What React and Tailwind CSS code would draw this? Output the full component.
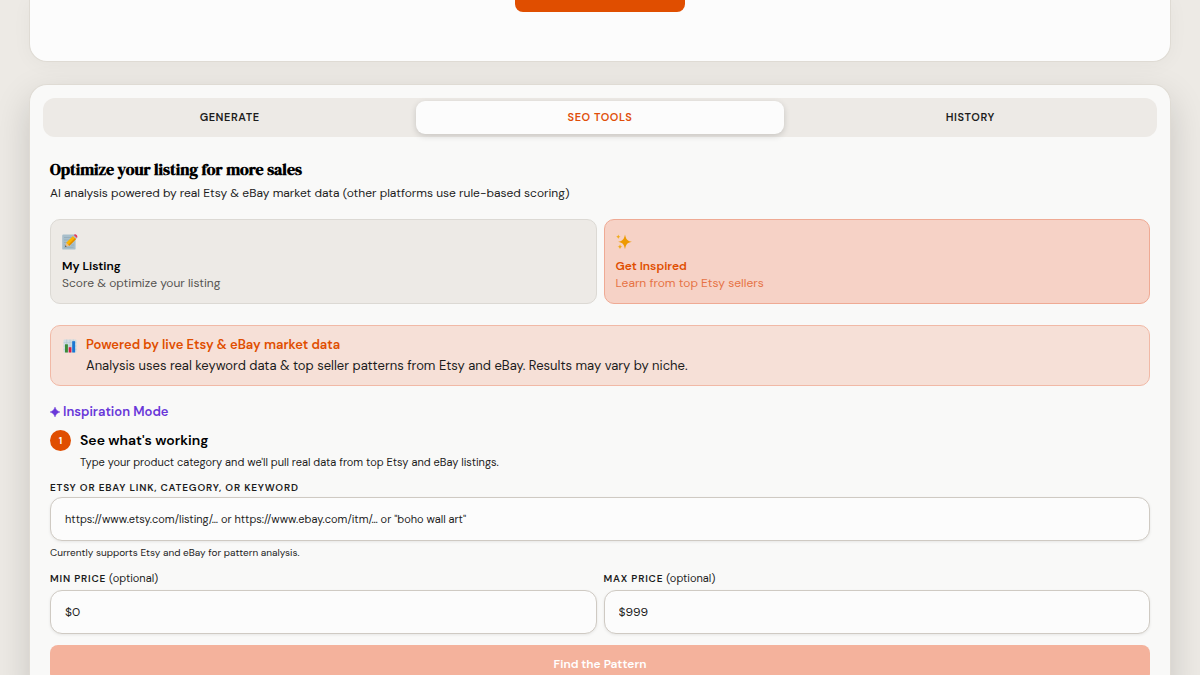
const MemoIcon = () => (
  <svg viewBox="0 0 16 16" className="block h-4 w-4" aria-hidden="true">
    <rect x="0.2" y="0.6" width="13.4" height="15" rx="1.2" fill="#a9bfcb" />
    <path
      d="M2 3.5h8M2 6h6M2 8.500h4M2 11h2M9 11h3M2 13.300h9.500"
      stroke="#7f98a6"
      strokeWidth="0.4"
    />
    <path d="M3 13l1.200-4.300 3.100 3z" fill="#e9bd8c" />
    <path d="M3 13l.5-1.700 1.200 1.100z" fill="#37474f" />
    <path d="M4.200 8.700L11 1.900l3.100 3-6.800 6.800z" fill="#fbb300" />
    <path d="M6.300 10.700L13.100 3.900l1 1-6.800 6.800z" fill="#e08a00" />
    <path d="M11 1.900l.8-.8 3.100 3-.8.800z" fill="#b0bec5" />
    <path d="M11.800 1.100c.8-1 1.800-1.100 2.800-.2.900.9 1 2.200.3 3.200z" fill="#e5395f" />
  </svg>
);

const SparklesIcon = () => (
  <svg viewBox="0 0 16 16" className="block h-4 w-4" aria-hidden="true">
    <path
      d="M9 .4c1.100 5 1.900 6.200 6.900 7.400-5 1.200-5.800 2.400-6.900 7.500C7.900 10.200 7.100 9 2.100 7.800 7.100 6.600 7.900 5.400 9 .4z"
      fill="#ee9a00"
    />
    <path
      d="M2.300.5c.4 1.500.8 1.900 2.300 2.300-1.500.4-1.900.8-2.300 2.300C1.900 3.600 1.500 3.200 0 2.800 1.500 2.400 1.900 2 2.300.5zM4 10.300c.4 1.600.9 2.100 2.500 2.500-1.600.4-2.100.9-2.500 2.500-.4-1.600-.9-2.100-2.500-2.500 1.600-.4 2.100-.9 2.500-2.500z"
      fill="#f0ab1c"
    />
  </svg>
);

const ChartIcon = () => (
  <svg viewBox="0 0 14 14" className="block h-3.5 w-3.5" aria-hidden="true">
    <rect x="0.500" y="0.500" width="13" height="13" rx="1" fill="#cfdce2" />
    <path
      d="M.5 3.700h13M.5 7h13M.5 10.300h13M3.700.5v13M7 .5v13M10.300.5v13"
      stroke="#a9c2cd"
      strokeWidth="0.5"
    />
    <rect x="2" y="5.300" width="2.900" height="8.200" fill="#3d8b37" />
    <rect x="5.700" y="8.200" width="2.700" height="5.300" fill="#d81b45" />
    <rect x="9.200" y="2.200" width="2.900" height="11.300" fill="#1976d2" />
  </svg>
);

const StarIcon = () => (
  <svg viewBox="0 0 10 10" className="block h-2.5 w-2.5" aria-hidden="true">
    <path d="M5 0c1.100 3 2 3.900 5 5-3 1.100-3.900 2-5 5-1.100-3-2-3.900-5-5 3-1.100 3.900-2 5-5z" fill="#6938d9" stroke="#6938d9" strokeWidth="0.4" />
  </svg>
);

const tabs = ["GENERATE", "SEO TOOLS", "HISTORY"];

const App = () => {
  return (
    <div className="min-h-screen overflow-hidden bg-[#edeae5] px-[29px] font-['DM_Sans',Inter,sans-serif] text-[#1c1c1c]">
      <section className="flex justify-center rounded-b-[18px] border border-t-0 border-[#dfdbd4] bg-[#fcfcfc] pb-[49px] shadow-[0_2px_20px_rgba(0,0,0,0.04)]">
        <button
          type="button"
          aria-label="Generate"
          className="h-3 w-[170px] rounded-b-lg bg-[#e04e00]"
        />
      </section>

      <main className="mt-[22px] rounded-t-[18px] border border-b-0 border-[#dfdbd4] bg-[#f9f9f8] p-[13px] shadow-[0_14px_36px_rgba(0,0,0,0.16)]">
        <div role="tablist" className="grid grid-cols-3 gap-[3px] rounded-xl bg-[#edeae6] p-[3px]">
          {tabs.map((tab) => (
            <button
              key={tab}
              type="button"
              role="tab"
              aria-selected={tab === "SEO TOOLS"}
              className={
                tab === "SEO TOOLS"
                  ? "h-[33px] rounded-[9px] bg-[#fcfcfc] text-[11px] font-semibold tracking-wider text-[#e04e0a] shadow-[0_2px_6px_rgba(0,0,0,0.16)]"
                  : "h-[33px] rounded-[9px] text-[11px] font-semibold tracking-wider text-[#1c1c1c]"
              }
            >
              {tab}
            </button>
          ))}
        </div>

        <div className="px-[7px] pt-[21px]">
          <h2 className="font-['DM_Serif_Display','Liberation_Serif',serif] text-[16px] font-bold leading-[22px] text-black">
            Optimize your listing for more sales
          </h2>
          <p className="mt-1 text-[12px] leading-[18px]">
            AI analysis powered by real Etsy &amp; eBay market data (other platforms use rule-based scoring)
          </p>

          <div className="mt-[17px] grid grid-cols-2 gap-[7px]">
            <button
              type="button"
              className="rounded-[10px] border border-[#dcd9d4] bg-[#edeae6] px-[11px] pb-[11px] pt-[14px] text-left"
            >
              <MemoIcon />
              <span className="mt-[7px] block text-[12px] font-semibold leading-[18px] text-black">
                My Listing
              </span>
              <span className="block text-[12px] leading-[17px] text-[#555350]">
                Score &amp; optimize your listing
              </span>
            </button>
            <button
              type="button"
              className="rounded-[10px] border border-[#efaa94] bg-[#f6d2c6] px-[11px] pb-[11px] pt-[14px] text-left"
            >
              <SparklesIcon />
              <span className="mt-[7px] block text-[12px] font-semibold leading-[18px] text-[#e04e00]">
                Get Inspired
              </span>
              <span className="block text-[12px] leading-[17px] text-[#e67245]">
                Learn from top Etsy sellers
              </span>
            </button>
          </div>

          <div className="mt-[21px] flex gap-[9px] rounded-[10px] border border-[#f1b9a6] bg-[#f6e0d7] px-3 py-[9px]">
            <div className="pt-1">
              <ChartIcon />
            </div>
            <div>
              <p className="text-[13px] font-semibold leading-5 text-[#e04e00]">
                Powered by live Etsy &amp; eBay market data
              </p>
              <p className="text-[13px] leading-[21px]">
                Analysis uses real keyword data &amp; top seller patterns from Etsy and eBay. Results may vary by niche.
              </p>
            </div>
          </div>

          <h3 className="mt-4 flex items-center gap-[3px] text-[13px] font-semibold leading-5 text-[#6938d9]">
            <StarIcon />
            Inspiration Mode
          </h3>

          <div className="mt-2 flex gap-[9px]">
            <span className="flex h-[21px] w-[21px] items-center justify-center rounded-full bg-[#e04e00] text-[10px] font-semibold text-white">
              1
            </span>
            <div>
              <h4 className="text-[14px] font-semibold leading-[21px] text-black">
                See what's working
              </h4>
              <p className="mt-[3px] text-[11px] leading-[17px]">
                Type your product category and we'll pull real data from top Etsy and eBay listings.
              </p>
            </div>
          </div>

          <form>
            <label htmlFor="keyword" className="mt-[9px] block text-[10px] font-semibold leading-4 tracking-[0.08em]">
              ETSY OR EBAY LINK, CATEGORY, OR KEYWORD
            </label>
            <input
              id="keyword"
              type="text"
              placeholder={'https://www.etsy.com/listing/… or https://www.ebay.com/itm/… or "boho wall art"'}
              className="mt-px block h-11 w-full rounded-xl border border-[#cfcac3] bg-[#fcfcfc] px-[14px] text-[11px] shadow-[0_1px_3px_rgba(0,0,0,0.08)] placeholder:text-[#1c1c1c]"
            />
            <p className="mt-1 text-[10px] leading-4">
              Currently supports Etsy and eBay for pattern analysis.
            </p>

            <div className="mt-[9px] grid grid-cols-2 gap-[7px]">
              <div>
                <label htmlFor="min-price" className="block text-[11px] leading-4">
                  <span className="text-[10px] font-semibold tracking-[0.08em]">MIN PRICE</span> (optional)
                </label>
                <input
                  id="min-price"
                  type="text"
                  placeholder="$0"
                  className="mt-[3px] block h-11 w-full rounded-xl border border-[#cfcac3] bg-[#fcfcfc] px-[14px] text-[12px] shadow-[0_1px_3px_rgba(0,0,0,0.08)] placeholder:text-[#1c1c1c]"
                />
              </div>
              <div>
                <label htmlFor="max-price" className="block text-[11px] leading-4">
                  <span className="text-[10px] font-semibold tracking-[0.08em]">MAX PRICE</span> (optional)
                </label>
                <input
                  id="max-price"
                  type="text"
                  placeholder="$999"
                  className="mt-[3px] block h-11 w-full rounded-xl border border-[#cfcac3] bg-[#fcfcfc] px-[14px] text-[12px] shadow-[0_1px_3px_rgba(0,0,0,0.08)] placeholder:text-[#1c1c1c]"
                />
              </div>
            </div>

            <button
              type="button"
              className="mt-[11px] block h-[37px] w-full rounded-lg bg-[#f4b29c] text-[12px] font-semibold text-white"
            >
              Find the Pattern
            </button>
          </form>
        </div>
      </main>
    </div>
  );
};

export default App;
